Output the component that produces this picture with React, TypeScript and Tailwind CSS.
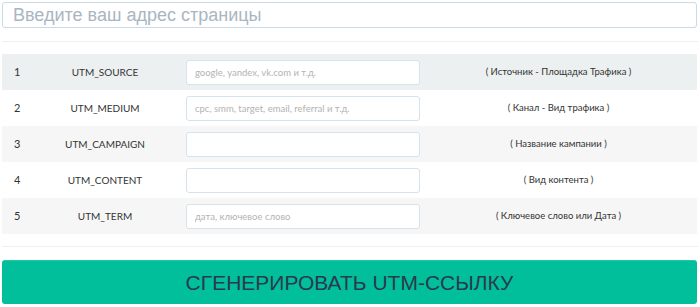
const rows = [
  { n: 1, name: 'UTM_SOURCE', ph: 'google, yandex, vk.com и т.д.', desc: '( Источник - Площадка Трафика )', bg: 'bg-[#ecf0f1]' },
  { n: 2, name: 'UTM_MEDIUM', ph: 'cpc, smm, target, email, referral и т.д.', desc: '( Канал - Вид трафика )', bg: 'bg-white' },
  { n: 3, name: 'UTM_CAMPAIGN', ph: '', desc: '( Название кампании )', bg: 'bg-[#f6f6f6]' },
  { n: 4, name: 'UTM_CONTENT', ph: '', desc: '( Вид контента )', bg: 'bg-white' },
  { n: 5, name: 'UTM_TERM', ph: 'дата, ключевое слово', desc: '( Ключевое слово или Дата )', bg: 'bg-[#f6f6f6]' },
]

export default function App() {
  return (
    <div className="w-[700px] h-[307px] bg-white overflow-hidden px-[2px] pt-[2px] font-['Lato','Liberation_Sans',sans-serif]">
      <input
        type="text"
        placeholder="Введите ваш адрес страницы"
        className="block w-[695px] h-[26px] border border-[#c9dbe8] rounded-[3px] px-[10px] text-[18px] font-['Liberation_Sans',Arial,sans-serif] text-[#333] placeholder:text-[#a9b6c2] outline-none"
      />
      <div className="mt-[13px] h-[1px] bg-[#f0f0f0]" />
      <div className="mt-[12px] w-[695px]">
        {rows.map((r) => (
          <div key={r.n} className={`flex items-center h-[36px] ${r.bg}`}>
            <div className="w-[40px] pl-[12px] text-[11px] text-[#333]">{r.n}</div>
            <div className="w-[126px] text-center text-[10px] text-[#333]">{r.name}</div>
            <div className="w-[252px] pl-[18px]">
              <input
                type="text"
                placeholder={r.ph}
                className="block w-[234px] h-[25px] bg-white border border-[#d5e3ec] rounded-[3px] px-[8px] text-[9.5px] text-[#333] placeholder:text-[#b3b3b3] outline-none"
              />
            </div>
            <div className="flex-1 text-center text-[9.5px] text-[#333]">{r.desc}</div>
          </div>
        ))}
      </div>
      <div className="mt-[12px] h-[1px] bg-[#f0f0f0]" />
      <button
        type="button"
        className="mt-[13px] block w-[695px] h-[44px] rounded-[3px] bg-[#00bf9a] border-t border-[#1fc9a5] text-[21px] text-[#2b3a4c] font-['Liberation_Sans',Arial,sans-serif]"
      >
        СГЕНЕРИРОВАТЬ UTM-ССЫЛКУ
      </button>
    </div>
  )
}
